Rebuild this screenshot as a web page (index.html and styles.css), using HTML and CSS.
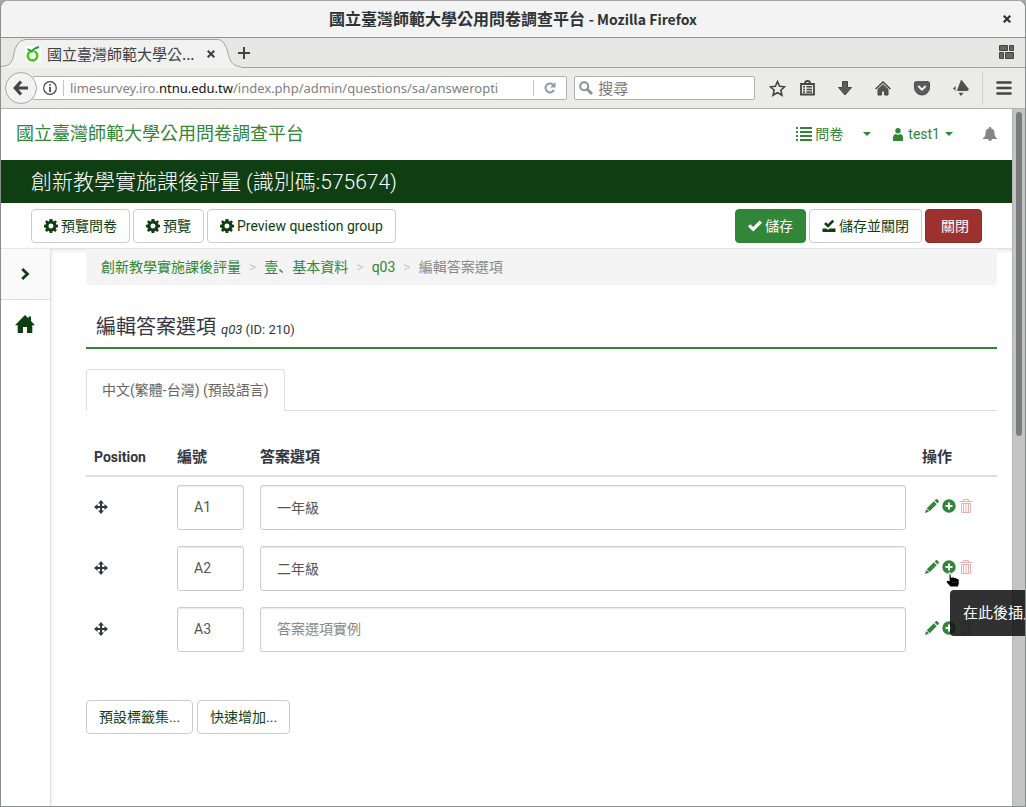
FILE: index.html
```html
<!DOCTYPE html>
<html lang="zh-Hant">
<head>
<meta charset="utf-8">
<title>國立臺灣師範大學公用問卷調查平台</title>
<link rel="stylesheet" href="styles.css">
</head>
<body>
<svg class="sprite" aria-hidden="true">
  <symbol id="gear" viewBox="0 0 14 14"><path fill-rule="evenodd" d="M5.600 0h2.800l.4 2 .9.4L11.400 1.200l1.500 1.600-1.100 1.600.4 1 1.800.3v2.600l-1.900.4-.4.9 1.100 1.600-1.700 1.700-1.600-1.100-1 .4L8.300 14H5.700l-.4-1.800-1-.4-1.600 1.100L1 11.200l1.100-1.600-.4-.9L0 8.300V5.700l1.800-.3.4-1L1.100 2.800l1.600-1.600 1.600 1.200.9-.4zM7 4.500a2.500 2.500 0 1 0 0 5 2.500 2.500 0 0 0 0-5z"/></symbol>
  <symbol id="check" viewBox="0 0 14 12"><path d="M0 6.600 2.200 4.200l3 2.700L11.600.5 14 2.700 5.300 11.500z"/></symbol>
  <symbol id="save-close" viewBox="0 0 14 14"><path d="M2 5l2-1.800 2 1.900L10.300.8l1.900 1.800L6 8.800zM.5 9.500h3.700l1.800 1.300 1.800-1.300h5.700V13H.5z"/></symbol>
  <symbol id="move" viewBox="0 0 14 14"><path d="M7 0l3 3.500H8V6h2.500V4L14 7l-3.500 3V8H8v2.500h2L7 14l-3-3.500h2V8H3.500v2L0 7l3.500-3v2H6V3.500H4z"/></symbol>
  <symbol id="pencil" viewBox="0 0 14 14"><path d="M0 14l1-3.800L2.600 11 4 12.800zM1.800 9.300 8.800 2.300l2.900 2.900-7 7zM9.600 1.500l1.300-1.200c.4-.3.900-.3 1.300 0l1.500 1.500c.3.400.3.900 0 1.300l-1.200 1.300z"/></symbol>
  <symbol id="plus" viewBox="0 0 14 14"><path fill-rule="evenodd" d="M7 .3a6.700 6.700 0 1 0 0 13.400A6.700 6.700 0 0 0 7 .3zM6 3.500h2V6h2.500v2H8v2.500H6V8H3.500V6H6z"/></symbol>
  <symbol id="trash" viewBox="0 0 14 16"><path fill="none" stroke="currentColor" d="M.5 3.500h13M4.500 3V1.500h5V3M2.500 5.500v9h9v-9zM4.500 5.500V15M7 5.500V15M9.500 5.500V15"/></symbol>
  <symbol id="home" viewBox="0 0 20 18"><path d="M10 0l3.500 3.600V1.500H16v4.600l4 4.200h-2.700V18H12v-6H8v6H2.700v-7.700H0z"/></symbol>
  <symbol id="caret" viewBox="0 0 8 4"><path d="M0 0h8L4 4z"/></symbol>
</svg>
<div class="window">
  <header class="titlebar">
    <span class="titlebar-text">國立臺灣師範大學公用問卷調查平台 <span class="app-name">- Mozilla Firefox</span></span>
    <button class="plain window-close" aria-label="關閉視窗"><svg width="8" height="8" viewBox="0 0 8 8" stroke="#2e3436" stroke-width="2.200"><path d="M.7.7l6.600 6.600M7.300.7.7 7.300"/></svg></button>
  </header>
  <div class="tabstrip">
    <div class="tab">
      <svg class="tab-edge" width="28" height="29" viewBox="0 0 28 29"><path fill="#f1f1f0" d="M0 29V27.500C15 27 11 15 15 8 18 2 21 .5 28 .5V29z"/><path fill="none" stroke="#a0a1a3" d="M0 27.500C15 27 11 15 15 8 18 2 21 .5 28 .5"/></svg>
      <div class="tab-body">
        <svg width="16" height="16" viewBox="0 0 16 16"><path fill="#fff" d="M0 0h16v16H0z"/><circle cx="7.500" cy="9.700" r="4.700" fill="none" stroke="#46c80f" stroke-width="2.600"/><path fill="#fff" d="M4.500 3.500h6L7.500 7z"/><path fill="none" stroke="#15a03a" stroke-width="1.800" d="M2.500 3l4.500 2.500M6.500 6Q9 2 14 1"/></svg>
        <span class="tab-title">國立臺灣師範大學公...</span>
        <button class="plain" aria-label="關閉分頁"><svg width="8" height="8" viewBox="0 0 8 8" stroke="#3e4244" stroke-width="2"><path d="M.7.7l6.600 6.600M7.300.7.7 7.300"/></svg></button>
      </div>
      <svg class="tab-edge" width="24" height="29" viewBox="0 0 24 29"><path fill="#f1f1f0" d="M0 29V.5C4 .5 6 2 9 8c4 9 2 19 15 19.500V29z"/><path fill="none" stroke="#a0a1a3" d="M24 27.500C11 27 13 17 9 8 6 2 4 .5 0 .5"/></svg>
    </div>
    <button class="plain" aria-label="新分頁"><svg width="12" height="12" viewBox="0 0 12 12" stroke="#444" stroke-width="2"><path d="M6 0v12M0 6h12"/></svg></button>
    <button class="plain tab-groups" aria-label="分頁群組"><svg width="15" height="15" viewBox="0 0 15 15" fill="#666" stroke="#444"><path d="M.5.5h8v5h-8zM10.500.5h4v5h-4zM.5 7.500h4v6h-4zM6.500 7.500h8v6h-8z"/></svg></button>
  </div>
  <nav class="navbar">
    <button class="plain back" aria-label="上一頁"><svg width="16" height="16" viewBox="0 0 16 16" fill="none" stroke="#444" stroke-width="3.200"><path d="M8 1.500 2.300 8 8 14.500M3 8h12"/></svg></button>
    <div class="urlbar">
      <svg width="14" height="14" viewBox="0 0 14 14"><circle cx="7" cy="7" r="6.300" fill="none" stroke="#444" stroke-width="1.200"/><path fill="#444" d="M6.200 3h1.700v1.600H6.200zM6.200 5.800h1.700V11H6.200z"/></svg>
      <span class="url-divider"></span>
      <div class="url" role="textbox" contenteditable="true" spellcheck="false" aria-label="網址">limesurvey.iro.<b>ntnu.edu.tw</b>/index.php/admin/questions/sa/answeropti</div>
      <span class="url-divider"></span>
      <button class="plain reload" aria-label="重新載入"><svg width="12" height="12" viewBox="0 0 12 12"><path fill="none" stroke="#8c9cae" stroke-width="2" d="M9 2.500A4.500 4.500 0 1 0 10 8"/><path fill="#8c9cae" d="M11.500 0v5.500H6z"/></svg></button>
    </div>
    <label class="searchbar">
      <svg width="14" height="14" viewBox="0 0 14 14" fill="none" stroke="#8e9192"><circle cx="5.200" cy="5.200" r="4" stroke-width="2"/><path stroke-width="2.800" d="M8.300 8.300 13 13"/></svg>
      <input class="search-input" type="search" placeholder="搜尋" aria-label="搜尋">
    </label>
    <div class="nav-tools">
      <button class="plain" aria-label="加入書籤"><svg width="17" height="17" viewBox="0 0 17 17"><path fill="none" stroke="#444" stroke-width="1.600" d="M8.500 1.500l2.100 4.800 5 .5-3.800 3.400 1.200 5.100-4.500-2.700L4 15.300l1.200-5.100L1.400 6.800l5-.5z"/></svg></button>
      <button class="plain" aria-label="書籤清單"><svg width="15" height="16" viewBox="0 0 15 16"><path fill="none" stroke="#444" stroke-width="1.800" d="M1 4h13v10.500H1zM5 3q0-2 2.500-2T10 3"/><path stroke="#444" stroke-width="1.500" d="M3 6.700h2M6.500 6.700H12M3 9.400h2M6.500 9.400H12M3 12h2M6.500 12H12"/></svg></button>
      <button class="plain" aria-label="下載"><svg width="14" height="15" viewBox="0 0 14 15"><path fill="#5c5c5c" stroke="#444" d="M4.500.5h5v6h4L7 14 .5 6.500h4z"/></svg></button>
      <button class="plain" aria-label="首頁"><svg width="16" height="15" viewBox="0 0 16 15"><path fill="none" stroke="#444" stroke-width="1.500" d="M.7 8 8 1l7.300 7"/><path fill="#555" stroke="#444" d="M3 8.300l5-4.600 5 4.600V14H9.500v-4h-3v4H3z"/></svg></button>
      <button class="plain" aria-label="Pocket"><svg width="16" height="15" viewBox="0 0 16 15"><path fill="#5c5c5c" stroke="#444" d="M1.500.7h13l1 1V6.500a7.500 7.500 0 0 1-15 0V1.700z"/><path fill="none" stroke="#f0f0f0" stroke-width="2" d="M4.300 5 8 8.700 11.700 5"/></svg></button>
      <button class="plain" aria-label="附加元件"><svg width="16" height="16" viewBox="0 0 16 16" fill="#505050"><path d="M8 0q1 0 1.500 1L15 8q2 2-1 3H4.500q-.5 0 0-2zM0 8.500l2.800-2.500q-.6 2.500 0 5zM5.500 12.800h5L8 16z"/></svg></button>
      <span class="menu-divider"></span>
      <button class="plain" aria-label="選單"><svg width="16" height="14" viewBox="0 0 16 14" stroke="#444" stroke-width="2.600" stroke-linecap="round"><path d="M1.500 1.500h13M1.500 7h13M1.500 12.500h13"/></svg></button>
    </div>
  </nav>
  <div class="viewport">
    <div class="page">
      <header class="site-header">
        <a class="brand" href="#">國立臺灣師範大學公用問卷調查平台</a>
        <a class="site-link surveys" href="#"><svg width="16" height="14" viewBox="0 0 16 14"><path stroke="currentColor" stroke-width="2" d="M0 1h2M4 1h12M0 5h2M4 5h12M0 9h2M4 9h12M0 13h2M4 13h12"/></svg>問卷</a>
        <button class="plain survey-caret" aria-label="問卷選單"><svg width="8" height="4"><use href="#caret"/></svg></button>
        <a class="site-link user" href="#"><svg width="10" height="13" viewBox="0 0 10 13"><circle cx="5" cy="2.700" r="2.700"/><path d="M0 13V9.500C0 7 2 6 3 6l2 1 2-1c1 0 3 1 3 3.500V13z"/></svg>test1<svg width="8" height="4"><use href="#caret"/></svg></a>
        <button class="plain bell" aria-label="通知"><svg width="14" height="14" viewBox="0 0 14 14"><path d="M6 0h2v1.200c2.500.6 3.500 2.300 3.500 5 0 2.500 1 4 2.500 5v.8H9c-.2 1.200-1 2-2 2s-1.800-.8-2-2H0v-.8c1.500-1 2.500-2.500 2.500-5 0-2.700 1-4.400 3.500-5z"/></svg></button>
      </header>
      <h1 class="survey-title">創新教學實施課後評量 (識別碼:575674)</h1>
      <div class="toolbar">
        <button class="btn"><svg width="14" height="14"><use href="#gear"/></svg>預覽問卷</button>
        <button class="btn"><svg width="14" height="14"><use href="#gear"/></svg>預覽</button>
        <button class="btn"><svg width="14" height="14"><use href="#gear"/></svg>Preview question group</button>
        <span class="spacer"></span>
        <button class="btn btn-save"><svg width="14" height="12"><use href="#check"/></svg>儲存</button>
        <button class="btn"><svg width="14" height="14"><use href="#save-close"/></svg>儲存並關閉</button>
        <button class="btn btn-close">關閉</button>
      </div>
      <div class="columns">
        <aside class="sidebar">
          <button class="plain side-toggle" aria-label="展開"><svg width="9" height="12" viewBox="0 0 9 12" fill="none" stroke="currentColor" stroke-width="2.800"><path d="M1.200 1 6.500 6l-5.300 5"/></svg></button>
          <a class="side-home" href="#" aria-label="首頁"><svg width="20" height="18"><use href="#home"/></svg></a>
        </aside>
        <main class="content">
          <ol class="breadcrumb">
            <li><a href="#">創新教學實施課後評量</a></li>
            <li><a href="#">壹<span class="comma" lang="ja">、</span>基本資料</a></li>
            <li><a href="#">q03</a></li>
            <li>編輯答案選項</li>
          </ol>
          <h2 class="page-title">編輯答案選項 <small><em>q03</em> (ID: 210)</small></h2>
          <div class="lang-tabs"><a class="lang-tab" href="#">中文(繁體-台灣) (預設語言)</a></div>
          <table class="answers">
            <colgroup><col class="col-side"><col class="col-side"><col><col class="col-side"></colgroup>
            <thead><tr><th>Position</th><th class="cjk">編號</th><th class="cjk">答案選項</th><th class="cjk">操作</th></tr></thead>
            <tbody>
              <tr>
                <td><svg class="move" width="14" height="14"><use href="#move"/></svg></td>
                <td><input class="field" value="A1" aria-label="編號 1"></td>
                <td><input class="field" value="一年級" aria-label="答案選項 1"></td>
                <td><div class="actions"><button class="plain" aria-label="編輯"><svg width="14" height="14"><use href="#pencil"/></svg></button><button class="plain" aria-label="插入"><svg width="14" height="14"><use href="#plus"/></svg></button><button class="plain delete" aria-label="刪除"><svg width="14" height="16"><use href="#trash"/></svg></button></div></td>
              </tr>
              <tr>
                <td><svg class="move" width="14" height="14"><use href="#move"/></svg></td>
                <td><input class="field" value="A2" aria-label="編號 2"></td>
                <td><input class="field" value="二年級" aria-label="答案選項 2"></td>
                <td><div class="actions"><button class="plain" aria-label="編輯"><svg width="14" height="14"><use href="#pencil"/></svg></button><button class="plain" aria-label="插入"><svg width="14" height="14"><use href="#plus"/></svg></button><button class="plain delete" aria-label="刪除"><svg width="14" height="16"><use href="#trash"/></svg></button>
                  <svg class="pointer" width="16" height="16" viewBox="0 0 16 16"><path stroke="#fff" stroke-width="1.200" d="M4 1q1.500-.6 1.800 1l.7 3 2-.4 1 .8 1.600-.2.8 1 1.600.2.8 1.200V12l-1 3H5L1 10.500 1.500 8l2.500.5z"/><path fill="none" stroke="#777" stroke-width=".6" stroke-dasharray="1 1" d="M7 10.500h5"/></svg>
                  <span class="tooltip" role="tooltip">在此後插入</span></div></td>
              </tr>
              <tr>
                <td><svg class="move" width="14" height="14"><use href="#move"/></svg></td>
                <td><input class="field" value="A3" aria-label="編號 3"></td>
                <td><input class="field" placeholder="答案選項實例" aria-label="答案選項 3"></td>
                <td><div class="actions"><button class="plain" aria-label="編輯"><svg width="14" height="14"><use href="#pencil"/></svg></button><button class="plain" aria-label="插入"><svg width="14" height="14"><use href="#plus"/></svg></button><button class="plain delete" aria-label="刪除"><svg width="14" height="16"><use href="#trash"/></svg></button></div></td>
              </tr>
            </tbody>
          </table>
          <div class="bottom-buttons"><button class="btn">預設標籤集...</button><button class="btn">快速增加...</button></div>
        </main>
      </div>
    </div>
    <div class="scrollbar"><div class="thumb"></div></div>
  </div>
</div>
</body>
</html>
```
FILE: styles.css
```css
* { box-sizing: border-box; }
html { overflow: hidden; background: #a8a8a8; }
body {
  margin: 0;
  font: 14px/20px Roboto, "Noto Sans CJK TC", sans-serif;
  color: #333641;
}
svg { display: block; flex: none; }
svg:not([fill]) { fill: currentColor; }
a { text-decoration: none; color: #328637; }
.sprite { display: none; }
.plain { display: flex; align-items: center; justify-content: center; padding: 0; border: 0; background: none; color: inherit; font: inherit; }

.window {
  display: flex;
  flex-direction: column;
  min-height: 100vh;
  border: 1px solid #8b8c8c;
  border-top-color: #a4a4a4;
  border-radius: 8px 8px 0 0;
  overflow: hidden;
  background: #fff;
}
.titlebar {
  display: flex;
  align-items: center;
  justify-content: center;
  position: relative;
  height: 37px;
  padding-bottom: 2px;
  border-bottom: 1px solid #8f908f;
  background: #f3f3f3;
  font: bold 16px/24px "Noto Sans CJK TC", sans-serif;
  color: #2e3436;
}
.app-name { font-size: 14px; }
.window-close { position: absolute; right: 14px; top: 14px; }

.tabstrip {
  display: flex;
  align-items: center;
  height: 30px;
  padding-right: 11px;
  border-bottom: 1px solid #a0a1a0;
  background: #e7e7e6;
}
.tab { display: flex; align-self: flex-end; margin-bottom: -1px; margin-right: -3px; }
.tab-body {
  display: flex;
  align-items: center;
  width: 192px;
  height: 29px;
  padding-right: 2px;
  margin-left: -4px;
  border-top: 1px solid #a0a1a3;
  background: #f1f1f0;
  font: 15px/24px "Noto Sans CJK TC", sans-serif;
  color: #3c4043;
}
.tab-title { flex: 1; margin-left: 6px; }
.tab-groups { margin-left: auto; }

.navbar {
  display: flex;
  align-items: center;
  height: 41px;
  padding: 0 13px 0 4px;
  border-bottom: 1px solid #b1b1ad;
  background: #ebebe9;
}
.back {
  width: 32px;
  height: 32px;
  border: 1px solid #aaa9a6;
  border-radius: 50%;
  background: #f3f3f3;
  z-index: 1;
}
.urlbar, .searchbar {
  display: flex;
  align-items: center;
  height: 24px;
  border: 1px solid #b1b1ad;
  border-radius: 2px;
  background: #fff;
}
.urlbar { flex: 549; gap: 6px; margin-left: -5px; padding-left: 10px; min-width: 0; }
.url {
  flex: 1;
  overflow: hidden;
  white-space: nowrap;
  outline: 0;
  font: 13px/22px "Noto Sans", sans-serif;
  color: #808080;
}
.url b { font-weight: normal; color: #111; }
.url-divider { width: 1px; height: 16px; background: #c4c4c4; }
.reload { width: 20px; margin-right: 6px; }
.searchbar { flex: 179; gap: 5px; margin-left: 7px; padding: 0 4px; min-width: 0; }
.search-input {
  flex: 1;
  min-width: 0;
  padding: 0;
  border: 0;
  outline: 0;
  background: none;
  font: 15px/20px "Noto Sans CJK TC", sans-serif;
}
.search-input::placeholder { color: #777; }
.nav-tools { display: flex; align-items: center; gap: 23px; margin-left: 14px; }
.nav-tools .plain:first-child { margin-right: -9px; }
.menu-divider { width: 1px; height: 34px; margin: 0 -10px; background: #cfcfcd; }

.viewport { display: flex; flex: 1; }
.page { display: flex; flex-direction: column; flex: 1; min-width: 0; }
.scrollbar { flex: none; width: 13px; padding: 3px; border-left: 1px solid #b3b4b4; background: #c3c4c3; }
.thumb { width: 6px; height: 324px; border-radius: 3px; background: #787c7c; }

.site-header {
  display: flex;
  align-items: center;
  height: 51px;
  padding: 0 15px 1px;
  color: #328637;
}
.brand { flex: 1; font-size: 18px; line-height: 24px; }
.site-link { display: flex; align-items: center; }
.surveys { gap: 3px; }
.survey-caret { margin: 0 22px 0 20px; }
.user { gap: 5px; }
.bell { margin-left: 30px; color: #858585; }
.survey-title {
  margin: 0;
  padding: 8px 30px 7px;
  background: #0f3e13;
  color: #fff;
  font-size: 21px;
  line-height: 28px;
  font-weight: 300;
}
.toolbar {
  display: flex;
  gap: 3px;
  padding: 6px 30px 5px;
  border-bottom: 1px solid #e2e2e2;
}
.spacer { flex: 1; }
.btn {
  display: flex;
  align-items: center;
  gap: 3px;
  height: 34px;
  padding: 0 12px;
  border: 1px solid #ccc;
  border-radius: 4px;
  background: #fff;
  color: #0f3e13;
  font: inherit;
  white-space: nowrap;
}
.btn-save { border-color: #328637; background: #328637; color: #fff; }
.btn-close { padding: 0 12px 0 15px; border-color: #8e2a27; background: #9c312d; color: #fff; }

.columns { display: flex; flex: 1; }
.sidebar { flex: none; width: 50px; border-right: 1px solid #e0e0e0; color: #0f3e13; box-shadow: 1px 0 3px #eee; }
.side-toggle { width: 100%; height: 51px; border-bottom: 1px solid #ddd; background: #fafafa; }
.side-home { display: flex; justify-content: center; padding: 15px 2px 0 0; color: inherit; }
.content { flex: 1; min-width: 0; padding: 0 15px 30px 35px; box-shadow: inset 0 4px 4px -3px #e4dede; }

.breadcrumb {
  display: flex;
  margin: 0;
  padding: 8px 15px;
  list-style: none;
  border-radius: 0 0 4px 4px;
  background: #f4f4f4;
  color: #888;
}
.breadcrumb li + li::before { content: ">"; padding: 0 8px; color: #ccc; }
.comma { font-family: "Noto Sans CJK JP", sans-serif; line-height: 1; }
.page-title {
  margin: 27px 0 20px;
  padding: 0 10px 5px;
  border-bottom: 2px solid #328637;
  font-size: 20px;
  line-height: 30px;
  font-weight: 400;
}
.page-title small { font-size: 13px; line-height: 1; }
.lang-tabs { display: flex; border-bottom: 1px solid #ddd; }
.lang-tab {
  padding: 10px 15px;
  margin-bottom: -1px;
  border: 1px solid #ddd;
  border-bottom-color: #fff;
  border-radius: 4px 4px 0 0;
  background: #fff;
  color: #666;
}
.answers { width: 100%; margin-top: 28px; table-layout: fixed; border-collapse: collapse; }
.col-side { width: 83px; }
.answers th { height: 37px; padding: 8px; border-bottom: 2px solid #ddd; text-align: left; }
.answers .cjk { font-size: 15px; }
.answers td { padding: 8px; }
.move { margin-bottom: 2px; }
.field {
  display: block;
  width: 100%;
  height: 45px;
  padding: 0 16px 2px;
  border: 1px solid #ccc;
  border-radius: 3px;
  outline: 0;
  background: #fff;
  box-shadow: inset 0 1px 1px #ececec;
  color: #555;
  font: inherit;
}
.field::placeholder { color: #888; }
.actions { display: flex; align-items: center; gap: 3px; padding-left: 3px; margin-bottom: 3px; position: relative; color: #328637; }
.delete { color: #eab0b0; }
.pointer { position: absolute; left: 23px; top: 13px; color: #000; z-index: 2; }
.tooltip {
  position: absolute;
  left: 28px;
  top: 31px;
  z-index: 1;
  padding: 13px;
  border-radius: 4px;
  background: rgba(20, 20, 20, .88);
  color: #fff;
  font-size: 15px;
  white-space: nowrap;
}
.bottom-buttons { display: flex; gap: 4px; margin-top: 40px; }
```
